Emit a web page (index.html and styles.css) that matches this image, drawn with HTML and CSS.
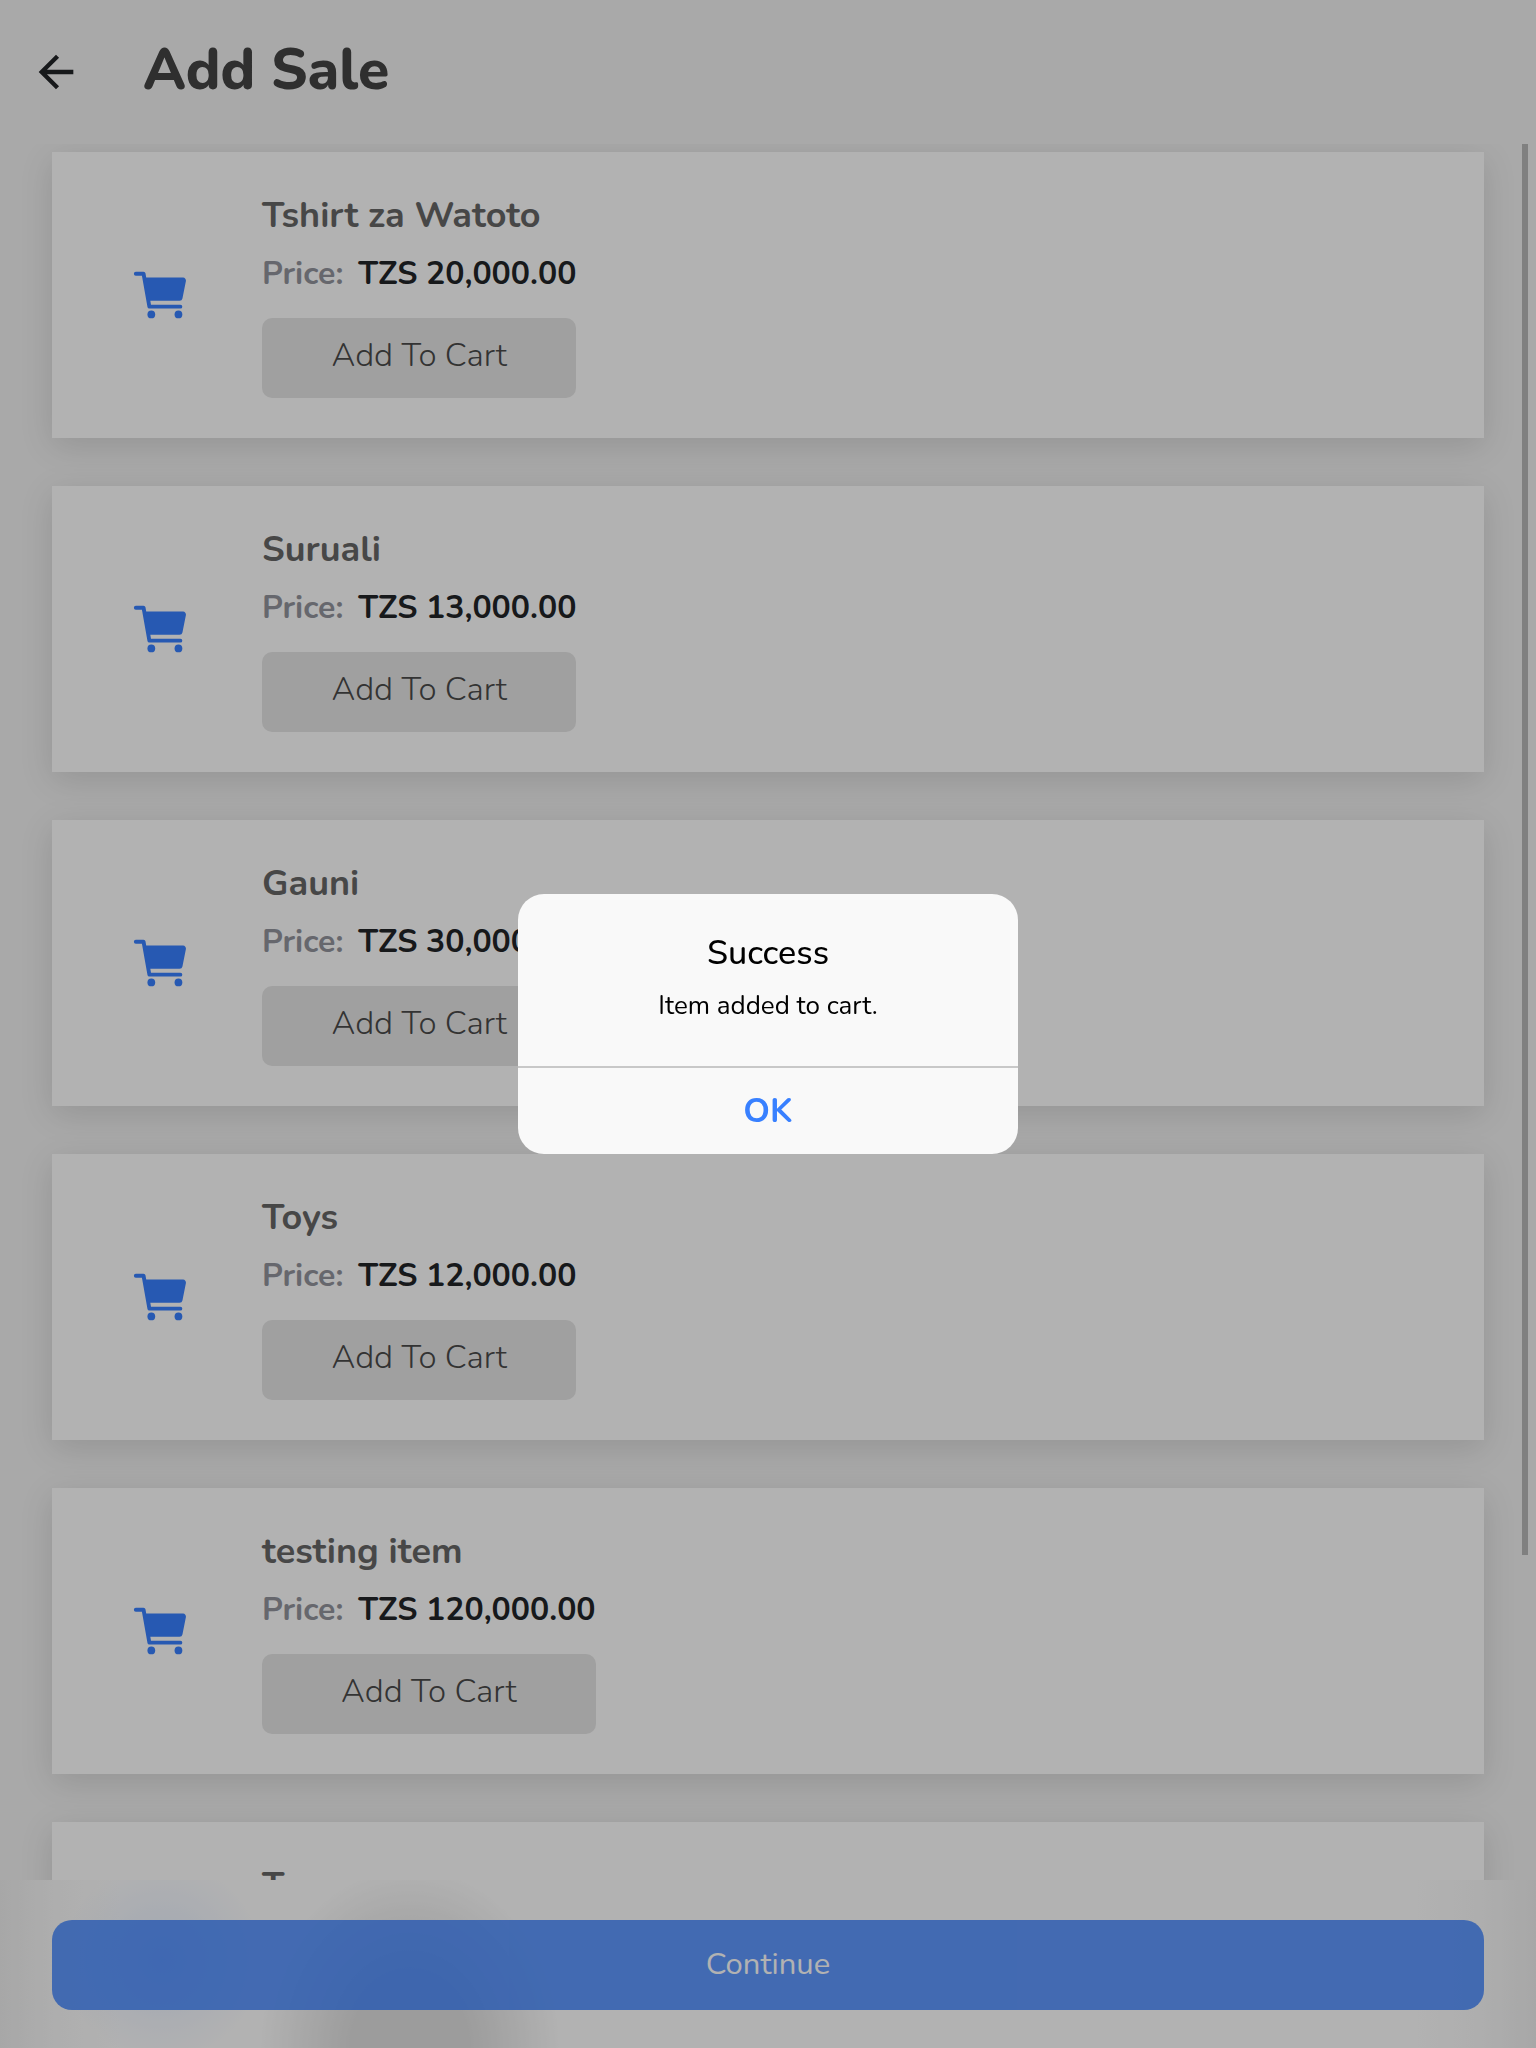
FILE: index.html
```html
<!DOCTYPE html>
<html lang="en">
<head>
<meta charset="utf-8">
<meta name="viewport" content="width=device-width, initial-scale=1">
<title>Add Sale</title>
<link rel="stylesheet" href="styles.css">
</head>
<body>
<svg class="defs" aria-hidden="true">
  <symbol id="cart" viewBox="0 0 512 512">
    <circle cx="176" cy="416" r="32"/><circle cx="400" cy="416" r="32"/>
    <path d="M456.8 120.78a23.92 23.92 0 00-18.56-8.78H133.89l-6.13-34.78A16 16 0 00112 64H48a16 16 0 000 32h50.58l45.66 258.78A16 16 0 00160 368h256a16 16 0 000-32H173.42l-5.64-32h241.66A24.07 24.07 0 00433 284.71l28.8-144a24 24 0 00-5-19.93z"/>
  </symbol>
</svg>
<div class="app">
  <header class="header">
    <button class="back" type="button" aria-label="Back">
      <svg viewBox="0 0 24 24"><path d="M20 11H7.83l5.59-5.59L12 4l-8 8 8 8 1.41-1.41L7.83 13H20v-2z"/></svg>
    </button>
    <h1 class="heading">Add Sale</h1>
  </header>
  <main class="content">
    <div class="list">
      <article class="card">
        <svg class="cart"><use href="#cart"/></svg>
        <div class="details">
          <h2 class="name">Tshirt za Watoto</h2>
          <p class="price"><span class="label">Price:</span><span>TZS 20,000.00</span></p>
          <button class="add" type="button">Add To Cart</button>
        </div>
      </article>
      <article class="card">
        <svg class="cart"><use href="#cart"/></svg>
        <div class="details">
          <h2 class="name">Suruali</h2>
          <p class="price"><span class="label">Price:</span><span>TZS 13,000.00</span></p>
          <button class="add" type="button">Add To Cart</button>
        </div>
      </article>
      <article class="card">
        <svg class="cart"><use href="#cart"/></svg>
        <div class="details">
          <h2 class="name">Gauni</h2>
          <p class="price"><span class="label">Price:</span><span>TZS 30,000.00</span></p>
          <button class="add" type="button">Add To Cart</button>
        </div>
      </article>
      <article class="card">
        <svg class="cart"><use href="#cart"/></svg>
        <div class="details">
          <h2 class="name">Toys</h2>
          <p class="price"><span class="label">Price:</span><span>TZS 12,000.00</span></p>
          <button class="add" type="button">Add To Cart</button>
        </div>
      </article>
      <article class="card">
        <svg class="cart"><use href="#cart"/></svg>
        <div class="details">
          <h2 class="name">testing item</h2>
          <p class="price"><span class="label">Price:</span><span>TZS 120,000.00</span></p>
          <button class="add" type="button">Add To Cart</button>
        </div>
      </article>
      <article class="card card-last">
        <div class="details">
          <h2 class="name">T</h2>
        </div>
      </article>
    </div>
    <div class="scrollbar"></div>
  </main>
  <footer class="footer">
    <button class="continue" type="button">Continue</button>
  </footer>
</div>
<div class="backdrop">
  <div class="alert" role="alertdialog" aria-labelledby="alert-title" aria-describedby="alert-text">
    <div class="alert-body">
      <h2 class="alert-title" id="alert-title">Success</h2>
      <p class="alert-text" id="alert-text">Item added to cart.</p>
    </div>
    <button class="alert-ok" type="button">OK</button>
  </div>
</div>
</body>
</html>
```
FILE: styles.css
```css
* { box-sizing: border-box; margin: 0; }

body {
  font-family: Nunito, "Open Sans", "Noto Sans", sans-serif;
  font-size: 32px;
  color: #222428;
  background: #f2f2f2;
}

button { font: inherit; border: 0; padding: 0; cursor: pointer; }

.defs { position: absolute; width: 0; height: 0; }

.app {
  display: grid;
  grid-template-rows: auto minmax(0, 1fr) auto;
  height: 100vh;
  overflow: hidden;
}

.header {
  display: flex;
  align-items: center;
  gap: 61px;
  height: 144px;
  padding: 0 30px;
}
.back { width: 52px; height: 52px; background: none; }
.back svg { display: block; width: 100%; height: 100%; fill: #222428; }
.heading { font-size: 57px; line-height: 76px; font-weight: 800; color: #444; padding-bottom: 4px; }

.content { position: relative; overflow: hidden; }
.list { display: flex; flex-direction: column; gap: 48px; padding: 8px 52px; }

.card {
  display: flex;
  flex: none;
  gap: 70px;
  height: 286px;
  padding: 40px 78px;
  background: #fff;
  box-shadow: 0 8px 32px rgba(0, 0, 0, .12);
}
.card-last { padding-left: 210px; }
.cart { flex: none; width: 62px; height: 62px; margin-top: 72px; fill: #3880ff; }
.details { display: flex; flex-direction: column; }
.name { font-size: 36px; line-height: 48px; font-weight: 700; color: #666; }
.price { display: flex; gap: 15px; line-height: 44px; font-weight: 700; margin: 12px 0 22px; }
.label { color: #92949c; }
.add {
  height: 80px;
  padding-bottom: 6px;
  border-radius: 10px;
  background: #e6e6e6;
  color: #4a4a4a;
  font-size: 33px;
  font-weight: 300;
}

.scrollbar {
  position: absolute;
  top: 0;
  right: 8px;
  width: 6px;
  height: 81.3%;
  background: #b8b8b8;
}

.footer {
  z-index: 1;
  padding: 40px 52px 38px;
  background:
    radial-gradient(100px 100px at 162px 80px, rgba(56, 128, 255, .12), transparent),
    radial-gradient(150px 180px at 410px 100%, rgba(0, 0, 0, .12) 40%, transparent),
    linear-gradient(90deg, #f0f0f0, #fafafa 60px, #fff 120px, #fff calc(100% - 120px), #fafafa calc(100% - 60px), #f0f0f0);
}
.continue {
  display: block;
  width: 100%;
  height: 90px;
  padding-bottom: 2px;
  border-radius: 20px;
  background: #3880ff;
  color: #fff;
  font-size: 31px;
  opacity: .8;
}

.backdrop {
  position: fixed;
  inset: 0;
  z-index: 2;
  display: flex;
  align-items: center;
  justify-content: center;
  background: rgba(0, 0, 0, .3);
}
.alert {
  width: 500px;
  overflow: hidden;
  border-radius: 26px;
  background: #f9f9f9;
  color: #000;
  text-align: center;
}
.alert-body { height: 172px; padding: 35px 32px; }
.alert-title { font-size: 34px; line-height: 48px; font-weight: 500; }
.alert-text { font-size: 26px; line-height: 36px; font-weight: 400; margin-top: 11px; }
.alert-ok {
  display: block;
  width: 100%;
  height: 88px;
  border-top: 2px solid #c8c8c8;
  background: none;
  color: #3880ff;
  font-size: 34px;
  font-weight: 700;
}
```
